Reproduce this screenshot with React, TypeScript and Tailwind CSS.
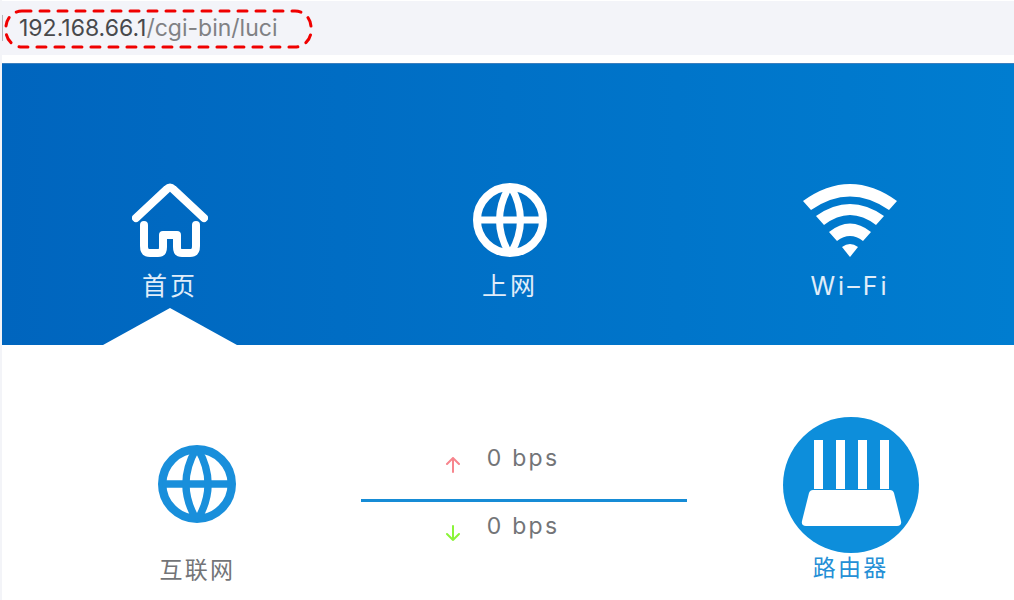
import type { ReactNode } from "react"

function HomeIcon() {
  return (
    <svg width="76" height="74" viewBox="0 0 76 74" fill="none" stroke="currentColor" strokeWidth="8" strokeLinecap="round" strokeLinejoin="round" aria-hidden="true">
      <path d="M4 35 35 6Q38 3 41 6L72 35" />
      <path d="M12 42V63Q12 70 18 70H26Q31 70 31 64V52H45V64Q45 70 50 70H58Q64 70 64 63V42" />
    </svg>
  )
}

function GlobeIcon({ size }: { size: number }) {
  return (
    <svg width={size} height={size} viewBox="0 0 74 74" fill="none" stroke="currentColor" strokeWidth="7" aria-hidden="true">
      <circle cx="37" cy="37" r="33" strokeWidth="8" />
      <path d="M4 37H70" />
      <path d="M36 4Q17 37 36 70M38 4Q57 37 38 70" />
    </svg>
  )
}

function WifiIcon() {
  return (
    <svg width="94" height="74" viewBox="0 0 94 74" fill="currentColor" aria-hidden="true">
      <path d="M0 18Q47 -16 94 18L86 27Q47 0 8 27Z" />
      <path d="M13 33Q47 9 81 33L73 42Q47 22 21 42Z" />
      <path d="M26 49Q47 32 68 49L60 58Q47 48 34 58Z" />
      <path d="M39 64Q47 58 55 64L47 74Z" />
    </svg>
  )
}

function RouterIcon() {
  return (
    <svg width="136" height="136" viewBox="0 0 136 136" aria-hidden="true">
      <circle cx="68" cy="68" r="68" fill="#0d8edb" />
      <path d="M31 23H40V72H31ZM53 23H62V72H53ZM75 23H84V72H75ZM97 23H106V72H97Z" fill="#fff" />
      <path d="M30 73H107Q110 73 111 76L118 104Q119 109 114 109H23Q18 109 19 104L26 76Q27 73 30 73Z" fill="#fff" />
    </svg>
  )
}

function ArrowIcon({ down = false }: { down?: boolean }) {
  return (
    <svg width="16" height="16" viewBox="0 0 16 16" fill="none" stroke="currentColor" strokeWidth="2" strokeLinecap="round" aria-hidden="true">
      <path d={down ? "M8 1V15M2 9L8 15L14 9" : "M8 15V1M2 7L8 1L14 7"} />
    </svg>
  )
}

function NavItem({ label, active, children }: { label: string; active?: boolean; children: ReactNode }) {
  return (
    <a href="#" className="flex flex-col items-center pt-[119px] text-white">
      {children}
      <span className="h-[51px] pt-2 text-[25px] leading-[42px] tracking-[3px] text-[#e0edf9]">{label}</span>
      {active && (
        <svg width="134" height="37" viewBox="0 0 134 37" fill="#fff" aria-hidden="true">
          <path d="M0 37 67 0 134 37Z" />
        </svg>
      )}
    </a>
  )
}

export default function App() {
  return (
    <div className="min-h-screen overflow-hidden border-l-2 border-[#f3f4f8] bg-white font-['Inter','Noto_Sans_CJK_SC',sans-serif]">
      <header className="relative flex h-[55px] items-center border-t border-white bg-[#f3f4f9]">
        <span className="h-[26px] w-px bg-[#b5b6bb]" />
        <p className="pl-4 text-[23px] leading-[54px] text-[#808184]">
          <span className="text-[#48494c]">192.168.66.1</span>/cgi-bin/luci
        </p>
        <svg className="absolute top-2 left-0.5" width="310" height="40" fill="none" aria-hidden="true">
          <rect x="2" y="2" width="305" height="36" rx="16" stroke="#f00000" strokeWidth="3" strokeDasharray="9 9" strokeLinecap="round" />
        </svg>
      </header>

      <div className="mt-2 overflow-hidden border-t border-[#3c7fbe] bg-linear-to-r from-[#0065be] to-[#007dd0]">
        <nav className="-mr-[6px] -ml-[2px] grid grid-cols-3">
          <NavItem label="首页" active>
            <HomeIcon />
          </NavItem>
          <NavItem label="上网">
            <GlobeIcon size={74} />
          </NavItem>
          <NavItem label="Wi–Fi">
            <WifiIcon />
          </NavItem>
        </nav>
      </div>

      <main className="grid grid-cols-3 pt-[72px] pl-8 text-[23px] tracking-widest text-[#737477]">
        <a href="#" className="flex flex-col items-center pt-7 text-[#198fdb]">
          <GlobeIcon size={78} />
          <span className="mt-8 leading-[30px] text-[#737477]">互联网</span>
        </a>

        <div className="pt-6">
          <div className="flex h-[58px] items-start pl-[84px] leading-[34px]">
            <span className="mt-4 mr-[26px] text-[#f7858d]">
              <ArrowIcon />
            </span>
            0 bps
          </div>
          <hr className="border-t-3 border-[#168cd6]" />
          <div className="flex items-start pt-[7px] pl-[84px] leading-[34px]">
            <span className="mt-4 mr-[26px] text-[#8af438]">
              <ArrowIcon down />
            </span>
            0 bps
          </div>
        </div>

        <a href="#" className="flex flex-col items-center text-[#258fd6]">
          <RouterIcon />
          <span className="leading-[30px]">路由器</span>
        </a>
      </main>
    </div>
  )
}
